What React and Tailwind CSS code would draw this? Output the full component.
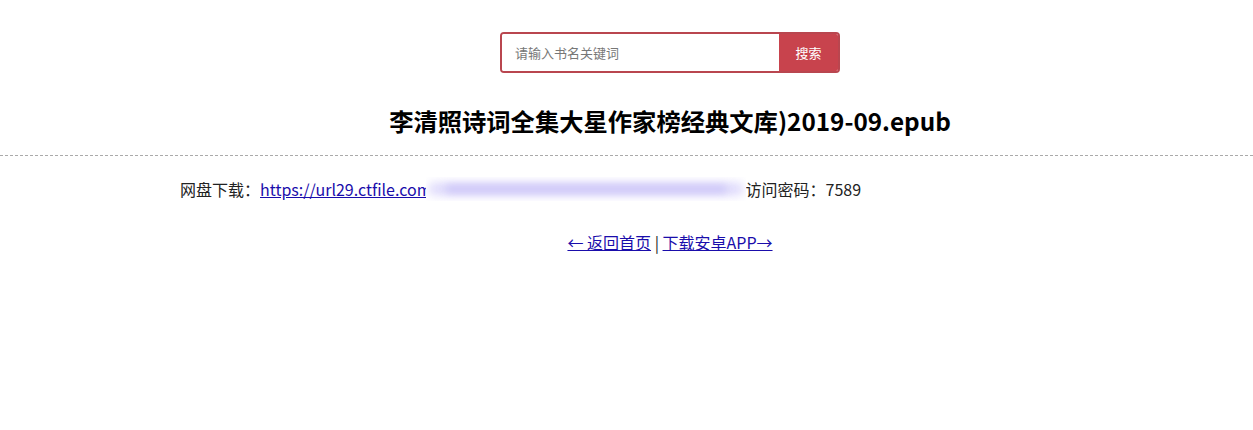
export default function App() {
  const font = { fontFamily: '"Noto Sans CJK SC", "Noto Sans", sans-serif' };
  return (
    <div className="w-[1253px] h-[430px] bg-white text-black" style={font}>
      <div className="flex pt-[32px] pl-[500px]">
        <div className="flex h-[41px] w-[340px] rounded-[4px] border-2 border-[#b9464f] overflow-hidden">
          <input
            className="flex-1 min-w-0 px-[13px] text-[13px] text-[#555] placeholder:text-[#777] outline-none bg-white"
            placeholder="请输入书名关键词"
            style={font}
          />
          <button className="w-[59px] bg-[#c8434d] text-white text-[13px]" style={font}>
            搜索
          </button>
        </div>
      </div>
      <h1 className="mt-[30px] ml-[180px] w-[980px] text-center text-[24.3px] font-bold leading-[36px]">
        李清照诗词全集大星作家榜经典文库)2019-09.epub
      </h1>
      <div className="mt-[16px] border-t border-dashed border-[#aaa]"></div>
      <div className="ml-[180px] mt-[21px] flex items-center text-[16px] leading-[24px] text-[#222]">
        <span>网盘下载：</span>
        <a href="#" className="text-[#1a0dab] underline">https://url29.ctfile.com</a>
        <span className="inline-block ml-[-6px] w-[320px] h-[24px] relative overflow-hidden bg-white">
          <span className="absolute left-[2px] top-[5px] h-[14px] w-[316px] bg-[#e2defc] blur-[4px] rounded-full"></span>
          <span className="absolute left-[20px] top-[9px] h-[6px] w-[280px] bg-[#c4bcf7] blur-[4px]"></span>
        </span>
        <span>访问密码：7589</span>
      </div>
      <div className="mt-[29px] ml-[180px] w-[980px] text-center text-[16px] leading-[24px] text-[#222]">
        <a href="#" className="text-[#1a0dab] underline">← 返回首页</a>
        <span> | </span>
        <a href="#" className="text-[#1a0dab] underline">下载安卓APP→</a>
      </div>
    </div>
  );
}
